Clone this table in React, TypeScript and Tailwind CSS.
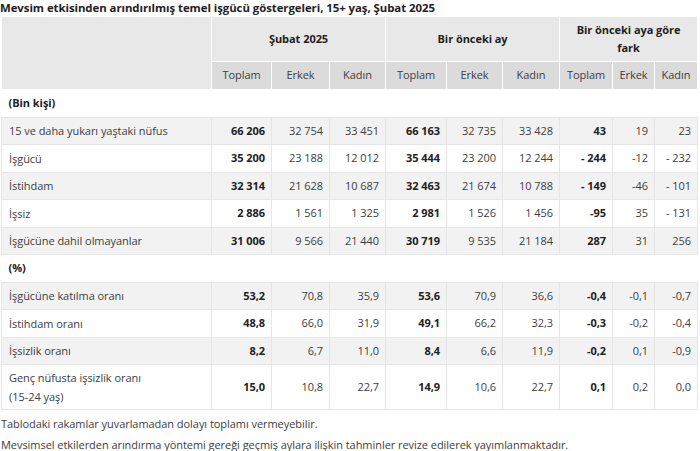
const groups = ["Şubat 2025", "Bir önceki ay", "Bir önceki aya göre fark"];
const subs = ["Toplam", "Erkek", "Kadın"];

type Row = { label: React.ReactNode; v: string[]; tall?: boolean };

const binKisi: Row[] = [
  { label: "15 ve daha yukarı yaştaki nüfus", v: ["66 206", "32 754", "33 451", "66 163", "32 735", "33 428", "43", "19", "23"] },
  { label: "İşgücü", v: ["35 200", "23 188", "12 012", "35 444", "23 200", "12 244", "- 244", "-12", "- 232"] },
  { label: "İstihdam", v: ["32 314", "21 628", "10 687", "32 463", "21 674", "10 788", "- 149", "-46", "- 101"] },
  { label: "İşsiz", v: ["2 886", "1 561", "1 325", "2 981", "1 526", "1 456", "-95", "35", "- 131"] },
  { label: "İşgücüne dahil olmayanlar", v: ["31 006", "9 566", "21 440", "30 719", "9 535", "21 184", "287", "31", "256"] },
];

const yuzde: Row[] = [
  { label: "İşgücüne katılma oranı", v: ["53,2", "70,8", "35,9", "53,6", "70,9", "36,6", "-0,4", "-0,1", "-0,7"] },
  { label: "İstihdam oranı", v: ["48,8", "66,0", "31,9", "49,1", "66,2", "32,3", "-0,3", "-0,2", "-0,4"] },
  { label: "İşsizlik oranı", v: ["8,2", "6,7", "11,0", "8,4", "6,6", "11,9", "-0,2", "0,1", "-0,9"] },
  {
    label: (
      <>
        Genç nüfusta işsizlik oranı
        <br />
        (15-24 yaş)
      </>
    ),
    v: ["15,0", "10,8", "22,7", "14,9", "10,6", "22,7", "0,1", "0,2", "0,0"],
    tall: true,
  },
];

const widths = [210, 60, 58, 56, 61, 56, 57, 53, 42, 43];

function DataRow({ row, striped }: { row: Row; striped: boolean }) {
  return (
    <tr className={`${row.tall ? "h-[45px]" : "h-[27.5px]"} ${striped ? "bg-[#f2f2f2]" : "bg-white"}`}>
      <td className="border border-[#e6e6e6] px-[7px] text-left leading-[19px]">{row.label}</td>
      {row.v.map((val, i) => (
        <td
          key={i}
          className={`border border-[#e6e6e6] pr-[6px] text-right whitespace-nowrap ${
            i % 3 === 0 ? "font-bold text-[#222]" : ""
          }`}
        >
          {val}
        </td>
      ))}
    </tr>
  );
}

function SectionRow({ label }: { label: string }) {
  return (
    <tr className="h-[27.5px] bg-white">
      <td colSpan={10} className="px-[7px] font-bold text-[#222]">
        {label}
      </td>
    </tr>
  );
}

export default function App() {
  return (
    <div className="w-[700px] h-[451px] overflow-hidden bg-white text-[11px] tracking-[-0.05px] text-[#404040] font-['Open_Sans',sans-serif]">
      <div className="h-[16px] leading-[16px] text-[11.4px] font-bold text-[#222] whitespace-nowrap">
        Mevsim etkisinden arındırılmış temel işgücü göstergeleri, 15+ yaş, Şubat 2025
      </div>
      <table className="ml-[1px] table-fixed border-collapse w-[696px]">
        <colgroup>
          {widths.map((w, i) => (
            <col key={i} style={{ width: w }} />
          ))}
        </colgroup>
        <thead>
          <tr className="h-[45px] bg-[#e8e8e8]">
            <th rowSpan={2} className="border border-white bg-[#e8e8e8]" />
            {groups.map((g) => (
              <th key={g} colSpan={3} className="border border-white px-[4px] font-bold text-[#222] leading-[18px] text-center">
                {g}
              </th>
            ))}
          </tr>
          <tr className="h-[28px] bg-[#dbdbdb]">
            {groups.map((g) =>
              subs.map((s) => (
                <th key={g + s} className="border border-white font-normal text-[#404040] whitespace-nowrap">
                  {s}
                </th>
              ))
            )}
          </tr>
        </thead>
        <tbody>
          <SectionRow label="(Bin kişi)" />
          {binKisi.map((r, i) => (
            <DataRow key={i} row={r} striped={i % 2 === 0} />
          ))}
          <SectionRow label="(%)" />
          {yuzde.map((r, i) => (
            <DataRow key={i} row={r} striped={i % 2 === 0} />
          ))}
        </tbody>
      </table>
      <p className="mt-[6px] leading-[16px] px-[1px]">Tablodaki rakamlar yuvarlamadan dolayı toplamı vermeyebilir.</p>
      <p className="mt-[5px] leading-[16px] px-[1px]">
        Mevsimsel etkilerden arındırma yöntemi gereği geçmiş aylara ilişkin tahminler revize edilerek yayımlanmaktadır.
      </p>
    </div>
  );
}
